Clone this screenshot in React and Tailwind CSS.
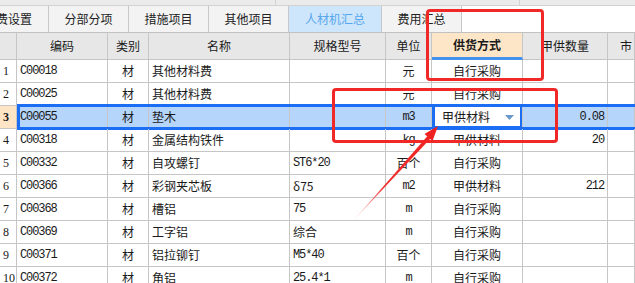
import React from 'react';

const tabs = [
  { label: '费设置', w: 'w-[49px]', first: true },
  { label: '分部分项', w: 'w-[80px]' },
  { label: '措施项目', w: 'w-[80px]' },
  { label: '其他项目', w: 'w-[80px]' },
  { label: '人材机汇总', w: 'w-[93px]', active: true },
  { label: '费用汇总', w: 'w-[80px]' },
];

const rows = [
  ['1', 'C00018', '材', '其他材料费', '', '元', '自行采购', ''],
  ['2', 'C00025', '材', '其他材料费', '', '元', '自行采购', ''],
  ['3', 'C00055', '材', '垫木', '', 'm3', '甲供材料', '0.08'],
  ['4', 'C00318', '材', '金属结构铁件', '', 'kg', '甲供材料', '20'],
  ['5', 'C00332', '材', '自攻螺钉', 'ST6*20', '百个', '自行采购', ''],
  ['6', 'C00366', '材', '彩钢夹芯板', 'δ75', 'm2', '甲供材料', '212'],
  ['7', 'C00368', '材', '槽铝', '75', 'm', '自行采购', ''],
  ['8', 'C00369', '材', '工字铝', '综合', 'm', '自行采购', ''],
  ['9', 'C00371', '材', '铝拉铆钉', 'M5*40', '百个', '自行采购', ''],
  ['10', 'C00372', '材', '角铝', '25.4*1', 'm', '自行采购', ''],
];

const cols = 'grid grid-cols-[17px_91px_41px_141px_96px_46px_91px_85px_1fr]';
const cell = 'border-r border-b border-[#c6c6c6] flex items-center overflow-hidden whitespace-nowrap';
const ascii = "font-['Liberation_Mono',monospace] text-[12px] tracking-[-1.1px]";

function Txt({ v }) {
  const isAscii = /^[\x00-\x7f]*$/.test(v);
  return <span className={isAscii ? ascii : ''}>{v}</span>;
}

export default function App() {
  return (
    <div className="relative w-[635px] h-[283px] overflow-hidden bg-white text-[12px] text-[#1a1a1a] font-['Noto_Sans_CJK_SC','Liberation_Sans',sans-serif]">
      {/* top strip */}
      <div className="h-[6px] bg-[#ebebeb] border-b border-[#d2d2d2] flex">
        <div className="w-[276px] border-r border-[#d2d2d2]" />
        <div className="w-[244px] border-r border-[#d2d2d2]" />
      </div>

      {/* tabs */}
      <div className="h-[27px] flex border-b border-[#c2c2c2] bg-white">
        {tabs.map((t) => (
          <div
            key={t.label}
            className={`${t.w} h-full shrink-0 overflow-hidden whitespace-nowrap border-r border-[#c8c8c8] flex items-center ${
              t.first ? 'justify-end pr-[16px]' : 'justify-center'
            } ${t.active ? 'bg-[#cde6fb] text-[#58a6ee]' : 'bg-[#f3f3f3] text-[#222]'}`}
          >
            <span className="shrink-0">{t.label}</span>
          </div>
        ))}
        <div className="flex-1 bg-white" />
      </div>

      {/* header */}
      <div className={`${cols} h-[27px] bg-[#e7e7e7]`}>
        <div className={`${cell} border-[#bdbdbd]`} />
        <div className={`${cell} border-[#bdbdbd] justify-center`}>编码</div>
        <div className={`${cell} border-[#bdbdbd] justify-center`}>类别</div>
        <div className={`${cell} border-[#bdbdbd] justify-center`}>名称</div>
        <div className={`${cell} border-[#bdbdbd] justify-center`}>规格型号</div>
        <div className={`${cell} border-[#bdbdbd] justify-center`}>单位</div>
        <div className={`${cell} border-[#bdbdbd] border-b-[3px] border-b-[#4491ee] justify-center bg-[#fde6c7] font-bold`}>
          供货方式
        </div>
        <div className={`${cell} border-[#bdbdbd] justify-center`}>甲供数量</div>
        <div className={`${cell} border-[#bdbdbd] pl-[12px]`}>市</div>
      </div>

      {/* rows */}
      {rows.map((r) => {
        const sel = r[0] === '3';
        return (
          <div key={r[0]} className={`${cols} relative h-[23px] ${sel ? 'bg-[#b5d5fb]' : ''}`}>
            <div
              className={`${cell} pl-[3px] font-['Liberation_Serif',serif] text-[12px] ${
                sel ? 'bg-[#fde4c5] font-bold' : 'bg-white'
              }`}
            >
              {r[0]}
            </div>
            <div className={`${cell} pl-[3px]`}><Txt v={r[1]} /></div>
            <div className={`${cell} justify-center`}>{r[2]}</div>
            <div className={`${cell} pl-[3px]`}>{r[3]}</div>
            <div className={`${cell} pl-[3px]`}><Txt v={r[4]} /></div>
            <div className={`${cell} justify-center`}><Txt v={r[5]} /></div>
            {sel ? (
              <div className={`${cell} relative bg-white pl-[10px] justify-between pr-[8px]`}>
                <span>{r[6]}</span>
                <svg width="9" height="5" viewBox="0 0 9 5">
                  <path d="M0 0h9L4.5 5z" fill="#6b98cc" />
                </svg>
                <div className="absolute -top-[2px] -bottom-[1px] left-0 -right-[1px] border-[3px] border-[#1b6ef3] pointer-events-none" />
              </div>
            ) : (
              <div className={`${cell} justify-center`}>{r[6]}</div>
            )}
            <div className={`${cell} justify-end pr-[3px]`}><Txt v={r[7]} /></div>
            <div className={cell} />
            {sel && (
              <div className="absolute -top-[2px] -bottom-[1px] left-[17px] right-0 border-y-[3px] border-l-[3px] border-[#1b6ef3] pointer-events-none" />
            )}
          </div>
        );
      })}

      {/* red annotations */}
      <div className="absolute left-[426px] top-[9px] w-[118px] h-[72px] border-[3px] border-[#f02828] rounded-[4px] pointer-events-none" />
      <div className="absolute left-[332px] top-[88px] w-[226px] h-[55px] border-[3px] border-[#f02828] rounded-[4px] pointer-events-none" />
      <svg className="absolute left-0 top-0 pointer-events-none" width="635" height="283" viewBox="0 0 635 283">
        <defs>
          <linearGradient id="ag" x1="353" y1="221" x2="438" y2="127" gradientUnits="userSpaceOnUse">
            <stop offset="0" stopColor="#f5a0a0" stopOpacity="0.4" />
            <stop offset="0.35" stopColor="#f03030" />
            <stop offset="1" stopColor="#f02020" />
          </linearGradient>
        </defs>
        <polygon points="353,221 427.5,136 430.5,138.6" fill="url(#ag)" />
        <polygon points="438,126 424.5,134 432.5,141" fill="#f02020" />
      </svg>
    </div>
  );
}
